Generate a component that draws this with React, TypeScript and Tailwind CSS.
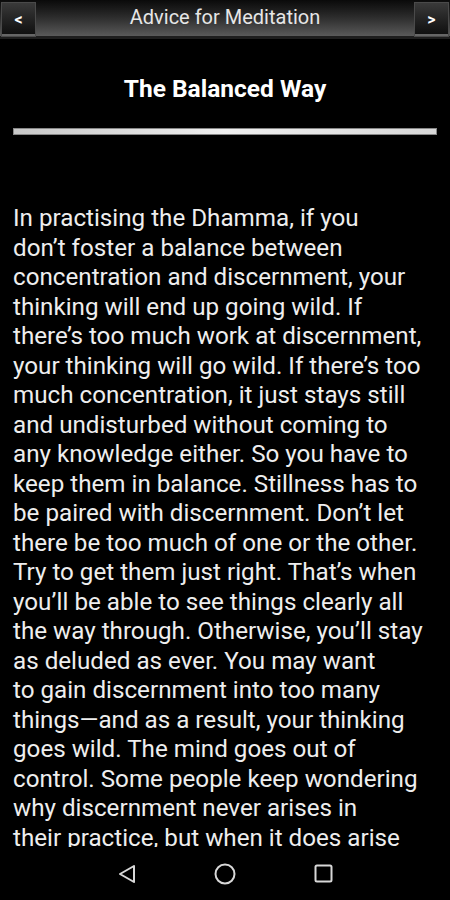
import React from "react";

const lines = [
    "In practising the Dhamma, if you",
    "don\u2019t foster a balance between",
    "concentration and discernment, your",
    "thinking will end up going wild. If",
    "there\u2019s too much work at discernment,",
    "your thinking will go wild. If there\u2019s too",
    "much concentration, it just stays still",
    "and undisturbed without coming to",
    "any knowledge either. So you have to",
    "keep them in balance. Stillness has to",
    "be paired with discernment. Don\u2019t let",
    "there be too much of one or the other.",
    "Try to get them just right. That\u2019s when",
    "you\u2019ll be able to see things clearly all",
    "the way through. Otherwise, you\u2019ll stay",
    "as deluded as ever. You may want",
    "to gain discernment into too many",
    "things\u2014and as a result, your thinking",
    "goes wild. The mind goes out of",
    "control. Some people keep wondering",
    "why discernment never arises in",
    "their practice, but when it does arise",
];

const NavButton = ({ dir }: { dir: "<" | ">" }) => (
    <button className="mt-[2px] h-[35px] w-[35px] flex items-center justify-center border border-[#4a4a4a] bg-gradient-to-b from-[#3a3a3a] to-[#0e0e0e] text-white font-bold text-[16px] leading-none shadow-[inset_0_-2px_0_#666]">
        {dir}
    </button>
);

const App = () => {
    return (
        <div
            className="h-[900px] w-[450px] bg-black flex flex-col overflow-hidden text-[#eeeeee]"
            style={{ fontFamily: "Roboto, 'Noto Sans', sans-serif" }}
        >
            <div className="h-[39px] flex justify-between bg-gradient-to-b from-[#0a0a0a] via-[#2e2e2e] to-[#5a5a5a] border-b-[3px] border-[#1e1e1e] px-[1px]">
                <NavButton dir="<" />
                <div className="flex-1 text-center text-[20px] leading-[35px] text-[#e6e6e6]">
                    Advice for Meditation
                </div>
                <NavButton dir=">" />
            </div>

            <div className="flex-1 overflow-hidden">
                <h1 className="mt-[35px] text-center font-bold text-[24.5px] leading-[30px] text-white">
                    The Balanced Way
                </h1>
                <div className="mx-[13px] mt-[24px] h-[7px] bg-gradient-to-r from-[#c8c8c8] via-[#f0f0f0] to-[#d8d8d8] border border-[#888]" />
                <div className="px-[13px] mt-[69px] text-[24.2px] leading-[29.5px] whitespace-nowrap">
                    {lines.map((l, i) => (
                        <div key={i}>{l}</div>
                    ))}
                </div>
            </div>

            <div className="h-[53px] flex items-center justify-center gap-[78px] text-[#d8d8d8]">
                <svg width="18" height="20" viewBox="0 0 18 20" fill="none" stroke="currentColor" strokeWidth="2" strokeLinejoin="round">
                    <path d="M16 2 L2 10 L16 18 Z" />
                </svg>
                <svg width="22" height="22" viewBox="0 0 22 22" fill="none" stroke="currentColor" strokeWidth="2">
                    <circle cx="11" cy="11" r="9.5" />
                </svg>
                <svg width="19" height="19" viewBox="0 0 19 19" fill="none" stroke="currentColor" strokeWidth="2">
                    <rect x="1.5" y="1.5" width="16" height="16" rx="1.5" />
                </svg>
            </div>
        </div>
    );
};

export default App;
